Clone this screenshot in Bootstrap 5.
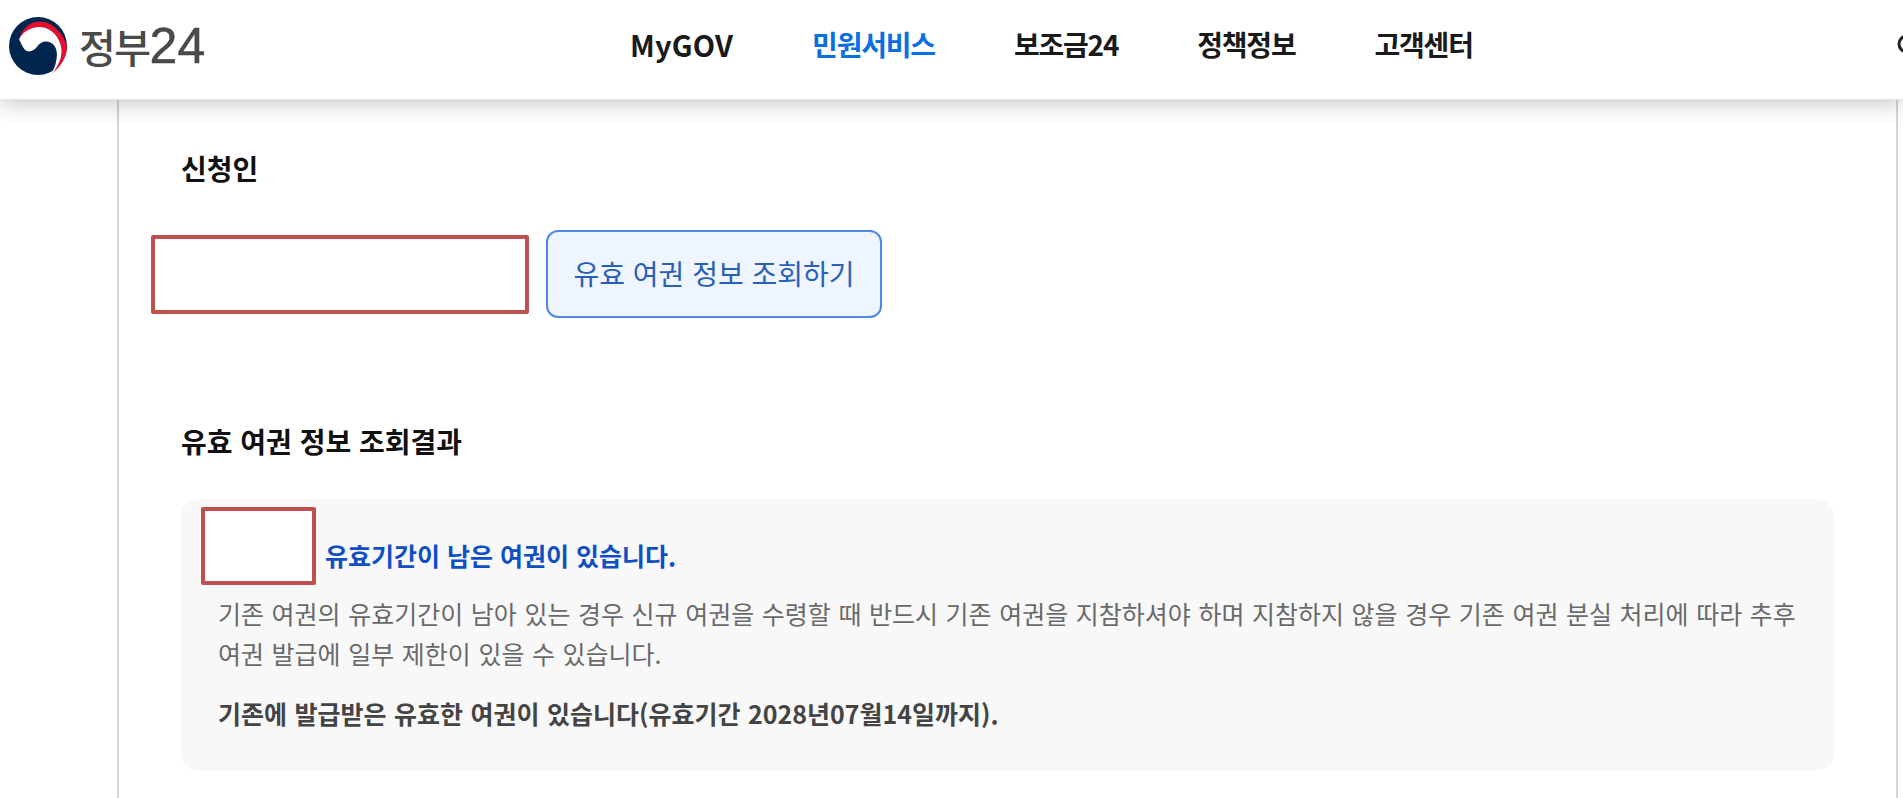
<!DOCTYPE html>
<html lang="ko">
<head>
  <meta charset="UTF-8">
  <title>정부24</title>
  <link href="https://cdn.jsdelivr.net/npm/bootstrap@5.3.0/dist/css/bootstrap.min.css" rel="stylesheet">
  <style>
    html, body { height: 100%; overflow: hidden; }
    body {
      background: #fff;
      font-family: "Liberation Sans", "Noto Sans CJK KR", sans-serif;
      color: #111;
    }
    .site-head {
      height: 100px;
      padding-bottom: 7px;
      background: #fff;
      position: relative;
      z-index: 10;
      border-bottom: 1px solid #e4e4e8;
      box-shadow: 0 3px 22px rgba(0,0,0,.24);
      overflow: hidden;
    }
    .logo-link { width: 630px; padding-left: 9px; gap: 12px; color: #4a4a4a; text-decoration: none; }
    .logo-text { font-size: 40px; line-height: 1; font-family: "Noto Sans CJK KR", sans-serif; font-weight: 500; letter-spacing: -1.5px; }
    .logo-num { font-family: "Liberation Sans", sans-serif; font-size: 50px; font-weight: 400; letter-spacing: 0; -webkit-text-stroke: .5px #4a4a4a; }
    .gnb-link {
      font-family: "Noto Sans CJK KR", sans-serif;
      font-size: 28px;
      font-weight: 700;
      letter-spacing: -1.2px;
      color: #1a1a1a;
      text-decoration: none;
      white-space: nowrap;
    }
    .gnb-link.on { color: #0b6fe0; }
    .gnb-link.gnb-en { font-size: 29px; letter-spacing: .2px; }
    .gnb-list { gap: 79px; padding-bottom: 2px; }
    .head-search { margin-left: auto; margin-right: -14px; flex: none; }
    .page-frame {
      margin-left: 117px;
      width: 1781px;
      height: 698px;
      border-left: 2px solid #d4d4d4;
      border-right: 2px solid #d4d4d4;
      padding: 51px 62px 0 62px;
      font-family: "Noto Sans CJK KR", sans-serif;
    }
    .sect-title { font-size: 28px; font-weight: 700; line-height: 34px; letter-spacing: 0; margin: 0; color: #111; }
    .mask-box { background: #fff; border: 4px solid #c0504d; border-radius: 2px; flex: none; }
    .mask-name { width: 378px; height: 79px; margin-left: -30px; }
    .mask-sign { width: 115px; height: 78px; }
    .btn.btn-lookup {
      background: #eef5ff;
      border: 2px solid #5088e8;
      border-radius: 12px;
      color: #2a5fb8;
      font-size: 28px;
      line-height: 1.2;
      height: 88px;
      width: 336px;
      padding: 0;
    }
    .lookup-row { margin-top: 45px; gap: 17px; }
    .result-title { margin-top: 106px; }
    .result-panel {
      margin-top: 41px;
      background: #f8f8f8;
      border-radius: 18px;
      height: 272px;
      padding: 8px 30px 0 20px;
    }
    .result-head { gap: 9px; }
    .result-msg { font-size: 25px; font-weight: 700; line-height: 34px; letter-spacing: 0; color: #0f4fc4; margin-bottom: 13px; }
    .result-desc { margin: 8px 0 0 17px; font-size: 25px; line-height: 40px; color: #6a6a6a; word-spacing: .6px; }
    .result-note { margin: 19px 0 0 17px; font-size: 25px; line-height: 42px; font-weight: 700; color: #444; word-spacing: .5px; }
  </style>
</head>
<body>
  <header class="site-head d-flex align-items-center">
    <a href="#" class="logo-link d-flex align-items-center flex-shrink-0">
      <svg width="58" height="58" viewBox="28 25 172 172" aria-hidden="true">
        <circle cx="114" cy="111" r="86" fill="#00264f"/>
        <path d="M58 92C66 58 92 38 118 38c24 0 46 12 58 30 6 6 12 10 24 43 0 34-20 66-50 85 16-12 34-40 34-71 0-30-26-70-66-70-28 0-52 20-60 37z" fill="#e60f2e"/>
        <path d="M58 92C66 72 90 55 118 55c40 0 66 40 66 70 0 31-18 59-34 71 12-14 20-36 20-62 0-20-14-36-32-36-12 0-20 6-27 15-6 8-14 14-25 14-12 0-18-14-28-35z" fill="#fff"/>
      </svg>
      <span class="logo-text">정부<span class="logo-num">24</span></span>
    </a>
    <nav class="d-flex gnb-list">
      <a href="#" class="gnb-link gnb-en">MyGOV</a>
      <a href="#" class="gnb-link on">민원서비스</a>
      <a href="#" class="gnb-link">보조금24</a>
      <a href="#" class="gnb-link">정책정보</a>
      <a href="#" class="gnb-link">고객센터</a>
    </nav>
    <svg class="head-search" width="20" height="24" viewBox="0 0 20 24" aria-hidden="true">
      <circle cx="10" cy="10" r="8" fill="none" stroke="#222" stroke-width="3"/>
    </svg>
  </header>

  <main class="page-frame">
    <h2 class="sect-title">신청인</h2>
    <div class="d-flex align-items-center lookup-row">
      <div class="mask-box mask-name"></div>
      <button type="button" class="btn btn-lookup">유효 여권 정보 조회하기</button>
    </div>

    <h2 class="sect-title result-title">유효 여권 정보 조회결과</h2>
    <section class="result-panel">
      <div class="d-flex align-items-end result-head">
        <div class="mask-box mask-sign"></div>
        <div class="result-msg">유효기간이 남은 여권이 있습니다.</div>
      </div>
      <p class="result-desc">기존 여권의 유효기간이 남아 있는 경우 신규 여권을 수령할 때 반드시 기존 여권을 지참하셔야 하며 지참하지 않을 경우 기존 여권 분실 처리에 따라 추후 여권 발급에 일부 제한이 있을 수 있습니다.</p>
      <p class="result-note">기존에 발급받은 유효한 여권이 있습니다(유효기간 2028년07월14일까지).</p>
    </section>
  </main>

  <script src="https://cdn.jsdelivr.net/npm/bootstrap@5.3.0/dist/js/bootstrap.bundle.min.js"></script>
</body>
</html>
